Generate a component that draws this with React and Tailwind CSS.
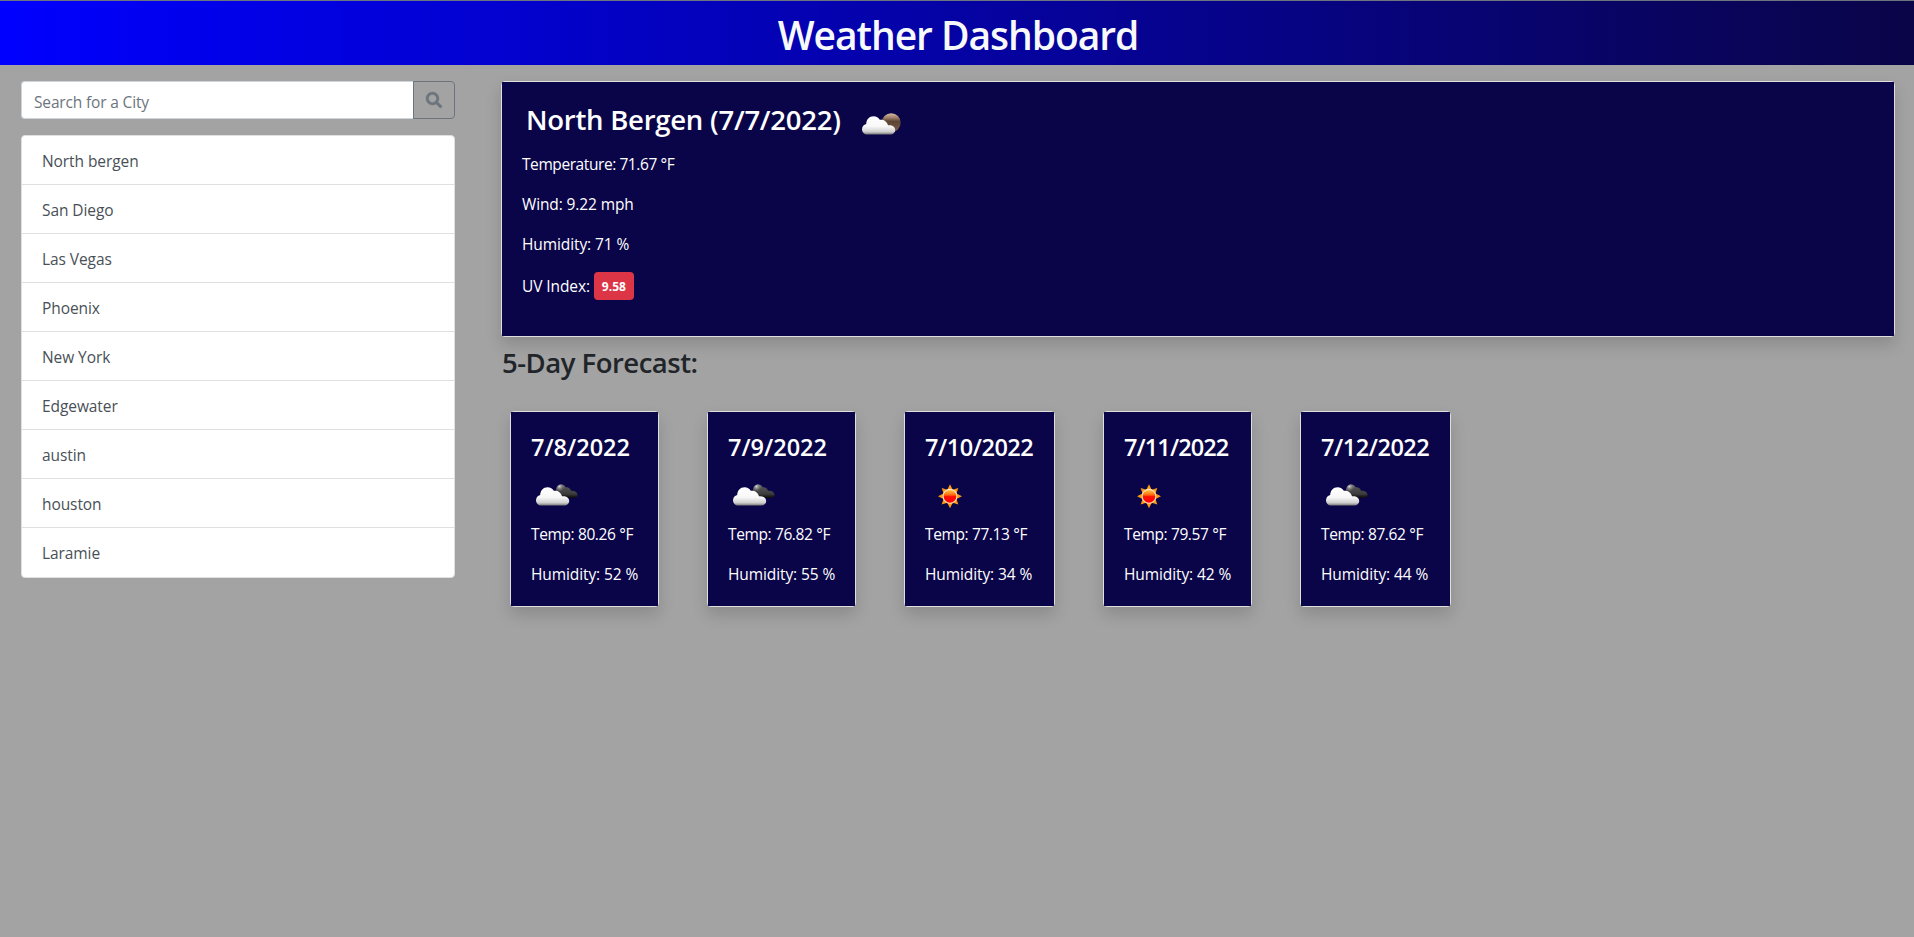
import React from "react";

const cities = ["North bergen", "San Diego", "Las Vegas", "Phoenix", "New York", "Edgewater", "austin", "houston", "Laramie"];

const forecast = [
  { date: "7/8/2022", tracking: "tracking-normal", icon: "clouds", temp: "80.26", humidity: 52, width: "w-[149px]" },
  { date: "7/9/2022", tracking: "tracking-normal", icon: "clouds", temp: "76.82", humidity: 55, width: "w-[149px]" },
  { date: "7/10/2022", tracking: "tracking-[-0.45px]", icon: "sun", temp: "77.13", humidity: 34, width: "w-[151px]" },
  { date: "7/11/2022", tracking: "tracking-[-0.9px]", icon: "sun", temp: "79.57", humidity: 42, width: "w-[149px]" },
  { date: "7/12/2022", tracking: "tracking-[-0.45px]", icon: "clouds", temp: "87.62", humidity: 44, width: "w-[151px]" },
];

const CLOUD = "M10.5 34.5C7.3 34.5 5 32.2 5 29.2c0-2.7 1.8-4.8 4.2-5.3C9.3 19.6 12.3 16.2 16.6 16.2c2.7 0 4.9 1.4 6.2 3.6 3.7-.5 7.2 1.5 8.2 5.5 4-.5 7.2 1.5 7.2 4.7 0 2.7-2.2 4.5-5 4.5z";

function Defs({ id }) {
  return (
    <defs>
      <linearGradient id={id + "white"} x1="0" y1="0" x2="0" y2="1">
        <stop offset="0" stopColor="#ffffff" />
        <stop offset="0.55" stopColor="#f8f8f8" />
        <stop offset="0.85" stopColor="#cfcfcf" />
        <stop offset="1" stopColor="#777777" />
      </linearGradient>
      <linearGradient id={id + "dark"} x1="0" y1="0" x2="0" y2="1">
        <stop offset="0" stopColor="#707070" />
        <stop offset="0.3" stopColor="#4c4c4c" />
        <stop offset="0.7" stopColor="#3c3c3c" />
        <stop offset="1" stopColor="#080808" />
      </linearGradient>
      <linearGradient id={id + "moon"} x1="0" y1="0" x2="0" y2="1">
        <stop offset="0" stopColor="#d8bda4" />
        <stop offset="0.25" stopColor="#9a7a62" />
        <stop offset="0.42" stopColor="#5c4534" />
        <stop offset="1" stopColor="#7a5d48" />
      </linearGradient>
      <radialGradient id={id + "halo"} cx="28.5" cy="15.5" r="5" gradientUnits="userSpaceOnUse">
        <stop offset="0" stopColor="#d0d0d0" />
        <stop offset="0.4" stopColor="#909090" stopOpacity="0.9" />
        <stop offset="1" stopColor="#707070" stopOpacity="0" />
      </radialGradient>
    </defs>
  );
}

function CloudsIcon({ id }) {
  return (
    <svg viewBox="0 0 50 50" className="block size-[50px]">
      <Defs id={id} />
      <path d="M25 20c0-3.8 2-6.4 5.2-6.4 2 0 3.6 1.1 4.4 2.7 2.6-.4 4.8 1 5.4 3.4 3.3-.3 6.5 1.3 6.5 4 0 2-1.5 3.3-3.5 3.3H27z" fill={`url(#${id}dark)`} />
      <path d="M25 20c0-3.8 2-6.4 5.2-6.4 2 0 3.600 1.100 4.400 2.700l-1 3-5 3z" fill={`url(#${id}halo)`} />
      <path d={CLOUD} fill={`url(#${id}white)`} />
    </svg>
  );
}

function MoonCloudIcon({ id }) {
  return (
    <svg viewBox="0 0 50 50" className="block size-[50px]">
      <Defs id={id} />
      <circle cx="34.2" cy="22.8" r="9.5" fill={`url(#${id}moon)`} />
      <path d={CLOUD} fill={`url(#${id}white)`} />
    </svg>
  );
}

function SunIcon({ id }) {
  return (
    <svg viewBox="0 0 50 50" className="block size-[50px]">
      <defs>
        <linearGradient id={id} x1="0" y1="0" x2="0" y2="1">
          <stop offset="0" stopColor="#ffd24a" />
          <stop offset="0.4" stopColor="#ff6a10" />
          <stop offset="0.52" stopColor="#ff1000" />
          <stop offset="1" stopColor="#ff0000" />
        </linearGradient>
      </defs>
      <path
        d="M25 13.3L27.7 18.8L33.3 17L31.5 22.6L37 25.3L31.5 28L33.3 33.6L27.7 31.8L25 37.3L22.3 31.8L16.7 33.6L18.5 28L13 25.3L18.5 22.6L16.7 17L22.3 18.8Z"
        fill="#fb9a12"
      />
      <circle cx="25" cy="25.3" r="6.9" fill={`url(#${id})`} stroke="#ffe3c4" strokeWidth="1.1" />
    </svg>
  );
}

function SearchIcon() {
  return (
    <svg viewBox="0 0 512 512" className="block size-4 overflow-visible" fill="currentColor" stroke="currentColor" strokeWidth="12">
      <path d="M505 442.7L405.3 343c-4.5-4.5-10.6-7-17-7H372c27.6-35.3 44-79.7 44-128C416 93.1 322.9 0 208 0S0 93.1 0 208s93.1 208 208 208c48.3 0 92.7-16.4 128-44v16.3c0 6.4 2.5 12.5 7 17l99.7 99.7c9.4 9.4 24.6 9.4 33.9 0l28.3-28.3c9.4-9.4 9.4-24.6.1-34zM208 336c-70.7 0-128-57.2-128-128 0-70.7 57.2-128 128-128 70.7 0 128 57.2 128 128 0 70.7-57.2 128-128 128z" />
    </svg>
  );
}

function CurrentLine({ className, children }) {
  return <p className={"h-6 text-[15.5px] leading-6 whitespace-nowrap " + className}>{children}</p>;
}

function ForecastCard({ day, index }) {
  return (
    <article className={"h-[196px] shrink-0 rounded border border-[#dfdfdf] shadow-[0_8px_16px_rgba(0,0,0,0.15)] " + day.width}>
      <div className="h-full bg-[#0a0548] p-5 text-white">
        <h4 className={"h-[29px] pt-px text-[23.5px] leading-[29px] font-semibold whitespace-nowrap " + day.tracking}>{day.date}</h4>
        <div className="mt-[10px] h-[51px]">
          {day.icon === "sun" ? <SunIcon id={"sun" + index} /> : <CloudsIcon id={"clouds" + index} />}
        </div>
        <p className="h-6 text-[15.5px] leading-6 tracking-[-0.38px] whitespace-nowrap">Temp: {day.temp} °F</p>
        <p className="mt-4 h-6 text-[15.5px] leading-6 tracking-[-0.1px] whitespace-nowrap">Humidity: {day.humidity} %</p>
      </div>
    </article>
  );
}

export default function App() {
  return (
    <div className="min-h-[937px] bg-[#a3a3a3] font-['Open_Sans',sans-serif]">
      <header className="h-[65px] border-t border-[#6c757d] bg-[linear-gradient(to_right,#0000ff,#0a0548)] text-center">
        <h1 className="pt-1.5 pl-0.5 text-[39px] leading-[56px] font-semibold tracking-[-1.05px] text-[#f8f9fa]">Weather Dashboard</h1>
      </header>

      <main className="flex pt-4">
        <aside className="ml-[21px] w-[434px] shrink-0">
          <form className="flex h-[38px]">
            <input
              placeholder="Search for a City"
              className="min-w-0 flex-1 rounded-l border border-r-0 border-[#ced4da] bg-white px-3 pt-[3px] text-[15.5px] leading-6 tracking-[-0.16px] placeholder:text-[#6c757d] placeholder:opacity-100"
            />
            <button type="button" className="flex w-[42px] justify-center rounded-r border border-[#6c757d] pt-[10px] text-[#6c757d]">
              <SearchIcon />
            </button>
          </form>
          <ul className="mt-4 overflow-hidden rounded border border-[#dfdfdf] bg-white">
            {cities.map((c) => (
              <li key={c} className="h-[49px] border-b border-[#dfdfdf] px-5 pt-[13px] text-[15.5px] leading-6 tracking-[-0.08px] text-[#495057] last:border-b-0">
                {c}
              </li>
            ))}
          </ul>
        </aside>

        <section className="ml-[46px] w-[1394px] shrink-0">
          <div className="h-[256px] rounded border border-[#dfdfdf] shadow-[0_8px_16px_rgba(0,0,0,0.15)]">
            <div className="h-full bg-[#0a0548] p-5 text-white">
              <div className="flex h-[50px]">
                <h3 className="w-[331px] pt-px pl-1 text-[27.5px] leading-[34px] font-semibold tracking-[-0.25px] whitespace-nowrap">North Bergen (7/7/2022)</h3>
                <div className="-mt-[2.5px] ml-1">
                  <MoonCloudIcon id="now" />
                </div>
              </div>
              <CurrentLine className="tracking-[-0.42px]">Temperature: 71.67 °F</CurrentLine>
              <CurrentLine className="mt-4 tracking-[-0.12px]">Wind: 9.22 mph</CurrentLine>
              <CurrentLine className="mt-4 tracking-[-0.1px]">Humidity: 71 %</CurrentLine>
              <div className="mt-4 flex h-7 items-center gap-1 text-[15.5px] tracking-[-0.1px]">
                <span className="pt-px">UV Index:</span>
                <span className="h-7 w-10 rounded bg-[#dc3545] pt-px text-center text-xs leading-7 font-bold tracking-normal">9.58</span>
              </div>
            </div>
          </div>

          <h3 className="mt-2 h-[66px] pt-px pl-px text-[27.5px] leading-[34px] font-semibold tracking-[-0.5px] text-[#212529]">5-Day Forecast:</h3>
          <div className="ml-[9px] flex gap-12">
            {forecast.map((d, i) => (
              <ForecastCard key={d.date} day={d} index={i} />
            ))}
          </div>
        </section>
      </main>
    </div>
  );
}
